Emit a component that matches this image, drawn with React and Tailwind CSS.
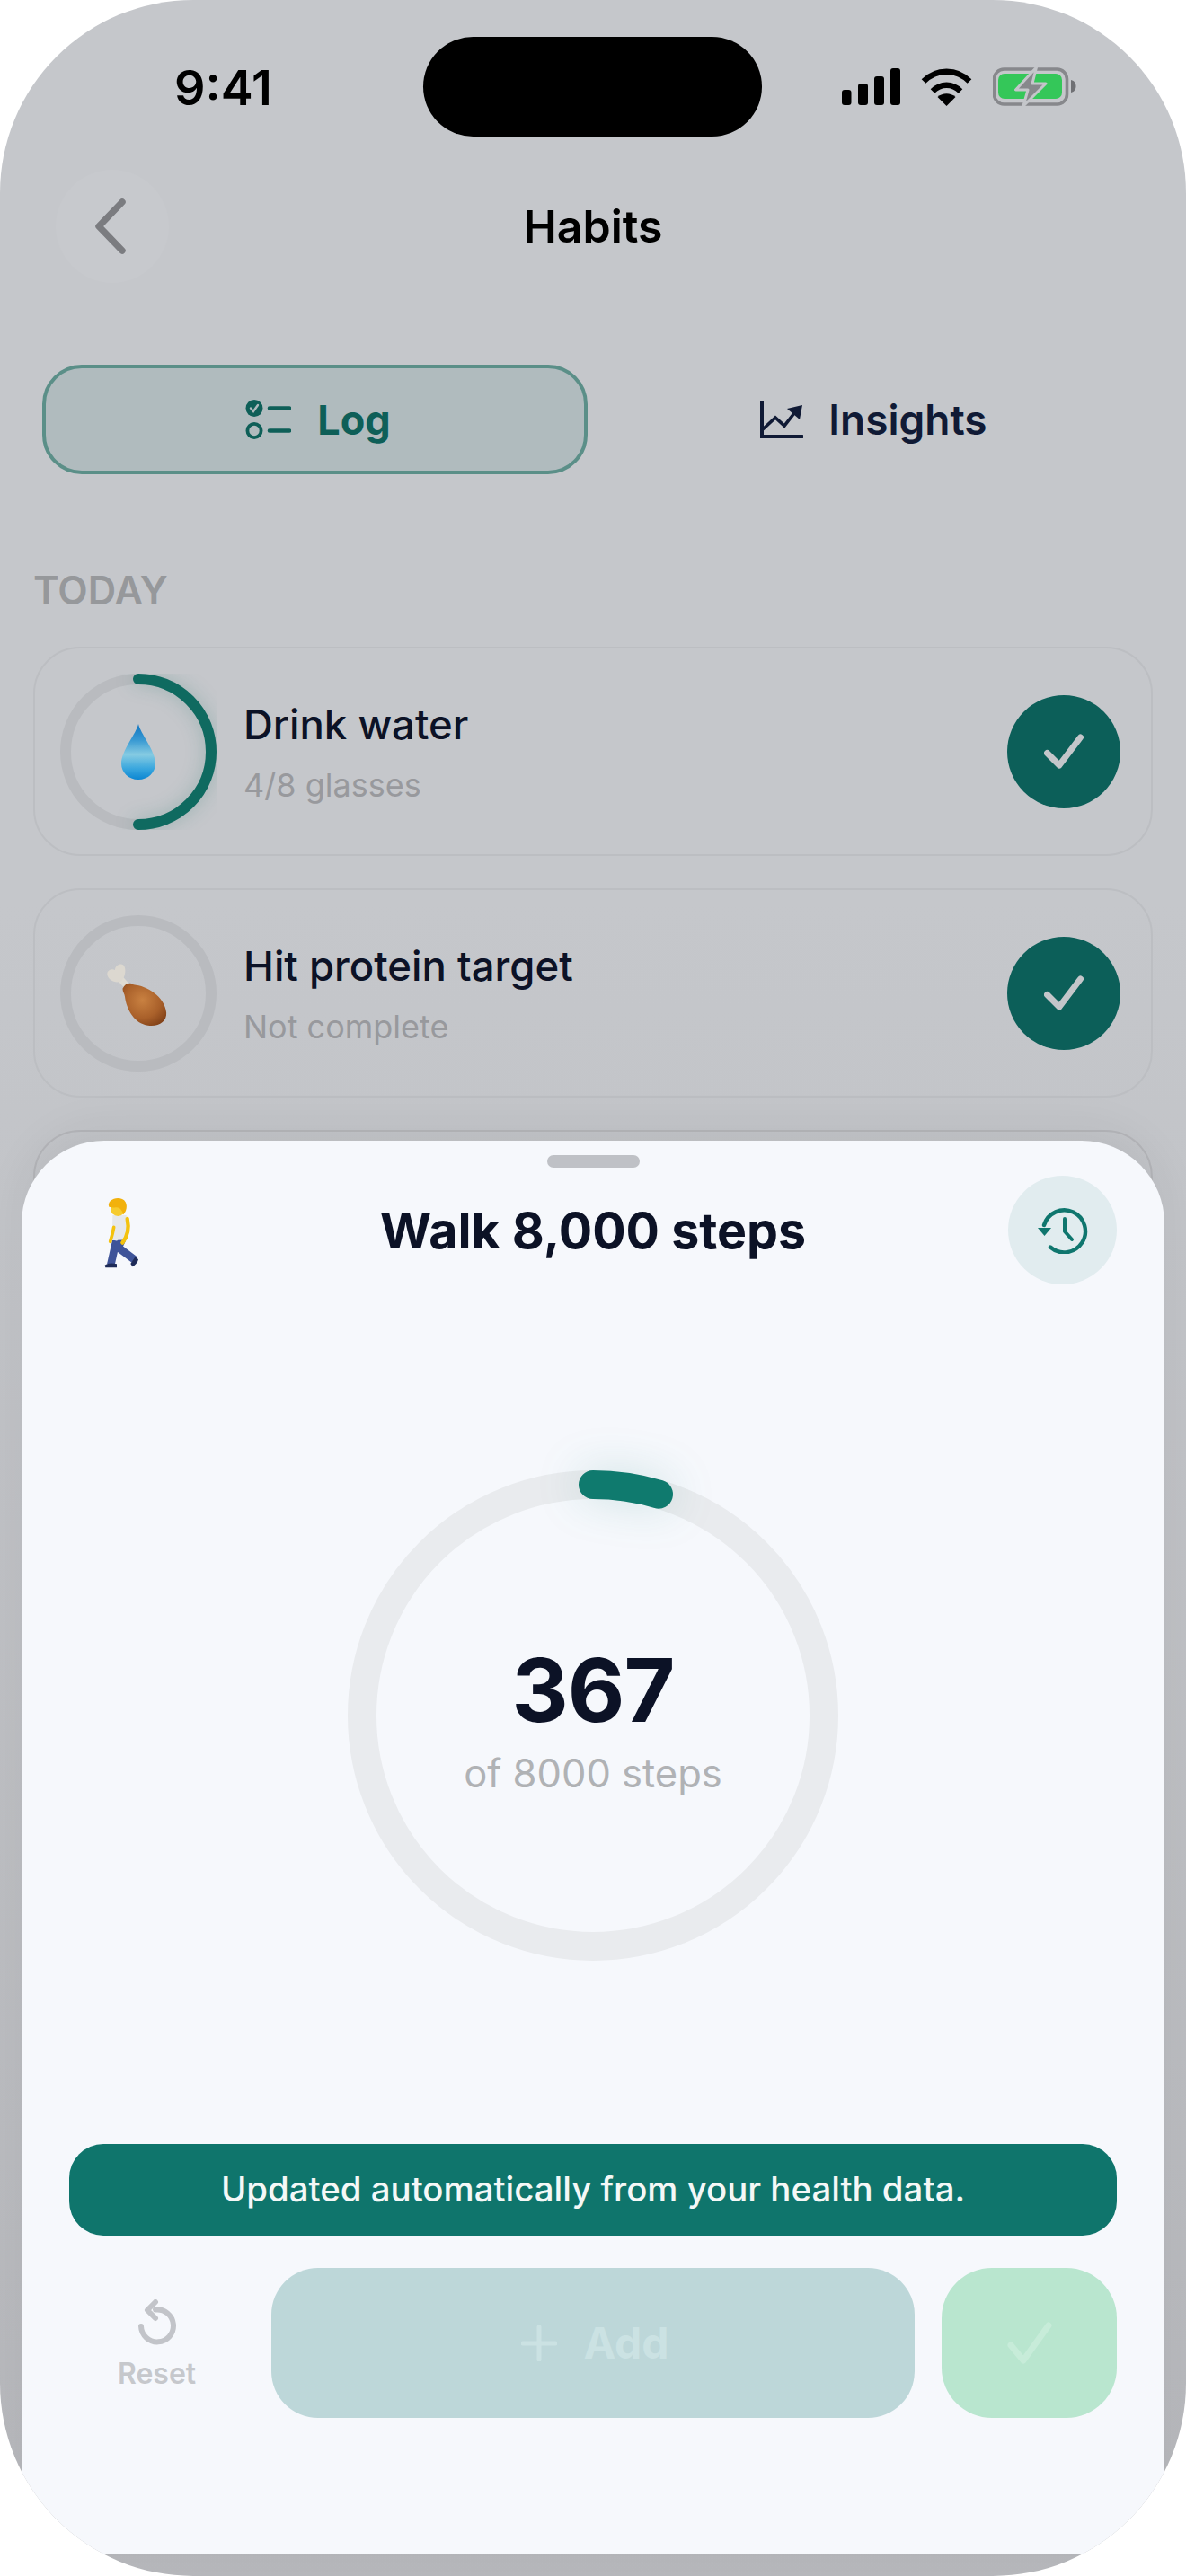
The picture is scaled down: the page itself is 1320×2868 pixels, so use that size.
import React from "react";

const Signal = () => (
  <svg width="65" height="41" viewBox="0 0 65 41" fill="#000">
    <rect x="0" y="24" width="10.5" height="17" rx="3" />
    <rect x="18" y="17" width="11" height="24" rx="3" />
    <rect x="36" y="9" width="11" height="32" rx="3" />
    <rect x="54" y="0" width="11" height="41" rx="3" />
  </svg>
);

const Wifi = () => (
  <svg width="57" height="42" viewBox="0 0 57 42" fill="none">
    <path d="M3 14.5C17 0 40 0 54 14.5" stroke="#000" strokeWidth="6.5" />
    <path d="M13 25.5C22 16.5 35 16.5 44 25.5" stroke="#000" strokeWidth="6.5" />
    <path d="M28.5 42L18.5 32C24 27 33 27 38.5 32Z" fill="#000" />
  </svg>
);

const Battery = () => (
  <svg width="93" height="43" viewBox="11 10 93 43" fill="none">
    <rect x="12.5" y="12" width="81" height="39" rx="11" stroke="#87888c" strokeWidth="3.6" />
    <rect x="17" y="17" width="71" height="28" rx="7" fill="#34c759" />
    <path d="M98 24C102 25 103.5 28 103.5 31C103.5 34 102 37 98 38Z" fill="#6f7074" />
    <path
      d="M59.5 10L36.5 35H50L45 53L70 28H55Z"
      fill="#87888c"
      stroke="#c4c6ca"
      strokeWidth="3"
      strokeLinejoin="round"
    />
  </svg>
);

const LogIcon = () => (
  <svg width="52" height="46" viewBox="13 10 52 46" fill="none">
    <circle cx="24" cy="20.5" r="9.5" fill="#0e5f58" />
    <path d="M20 20.5L23 24L28 17" stroke="#b0bbbe" strokeWidth="2.4" strokeLinecap="round" />
    <circle cx="24" cy="45.5" r="7.6" stroke="#0e5f58" strokeWidth="3.8" />
    <path d="M41 20.5H63M41 45.5H63" stroke="#0e5f58" strokeWidth="4.6" strokeLinecap="round" />
  </svg>
);

const InsightsIcon = () => (
  <svg width="48" height="42" viewBox="0 0 48 42" fill="none">
    <path d="M2 0V40H47" stroke="#101a35" strokeWidth="4" strokeLinecap="round" />
    <path d="M3 32L17 19L27 28L38 14" stroke="#101a35" strokeWidth="3.6" />
    <path d="M47 5L30 9L44 21Z" fill="#101a35" />
  </svg>
);

const HistoryIcon = () => (
  <svg width="56" height="52" viewBox="0 0 56 52" fill="none">
    <path d="M7 20A23.5 23.5 0 1 1 14 44.5" stroke="#0f766e" strokeWidth="4.4" strokeLinecap="round" />
    <path d="M0 23H15L7.5 32Z" fill="#0f766e" />
    <path d="M30 13V27L38 36" stroke="#0f766e" strokeWidth="4" strokeLinecap="round" strokeLinejoin="round" />
  </svg>
);

const Drop = () => (
  <svg width="38" height="62" viewBox="0 0 38 62">
    <defs>
      <linearGradient id="dropFill" x1="0.5" y1="0" x2="0.5" y2="1">
        <stop offset="0" stopColor="#0f74c0" />
        <stop offset="0.3" stopColor="#3b9bd3" />
        <stop offset="0.55" stopColor="#86cbe2" />
        <stop offset="0.8" stopColor="#3aa7de" />
        <stop offset="1" stopColor="#0c86d2" />
      </linearGradient>
    </defs>
    <path d="M19 0C21 10 38 30 38 44C38 54 30 62 19 62C8 62 0 54 0 44C0 30 17 10 19 0Z" fill="url(#dropFill)" />
  </svg>
);

const Drumstick = () => (
  <svg width="118" height="118" viewBox="0 0 330 330">
    <defs>
      <radialGradient id="meatFill" cx="0.45" cy="0.4" r="0.7">
        <stop offset="0" stopColor="#c98141" />
        <stop offset="0.6" stopColor="#a9602a" />
        <stop offset="1" stopColor="#7f3f17" />
      </radialGradient>
    </defs>
    <path d="M105 115L132 145" stroke="#dedbd3" strokeWidth="20" />
    <path
      d="M68 105C68 90 85 88 92 92C94 72 120 68 123 85C127 100 120 120 110 128C94 134 70 125 68 105Z"
      fill="#dcd8d0"
    />
    <path
      d="M116 150C123 135 138 128 150 138C192 142 247 175 252 225C254 252 228 270 195 265C153 260 128 215 123 175C122 165 116 160 116 150Z"
      fill="url(#meatFill)"
    />
  </svg>
);

const Walker = () => (
  <svg width="90" height="110" viewBox="0 0 270 330" fill="none">
    <path d="M118 205L100 285" stroke="#3f5499" strokeWidth="26" />
    <path d="M138 200L125 228L178 268" stroke="#3f5499" strokeWidth="26" strokeLinejoin="round" />
    <path d="M80 287C90 279 105 279 120 283V295H82Z" fill="#1e2b58" />
    <path d="M166 282L182 258L192 268C190 276 182 288 172 292Z" fill="#1e2b58" />
    <path d="M106 120L152 120C158 150 158 175 158 202L104 204Z" fill="#e6e8ea" />
    <path d="M110 160C107 178 103 192 98 208" stroke="#f4c20d" strokeWidth="11" strokeLinecap="round" />
    <path d="M155 132C161 160 158 188 139 212" stroke="#f4c20d" strokeWidth="13" strokeLinecap="round" />
    <circle cx="124" cy="98" r="25" fill="#f6cb2e" />
    <path d="M94 92C86 72 116 56 138 66C158 74 156 104 142 118C138 102 128 92 118 94C110 95 102 94 94 92Z" fill="#f2b10c" />
  </svg>
);

const HabitCard = ({ title, subtitle, progress, children }) => (
  <div className="h-[233px] flex items-center pl-[28px] pr-[34px] rounded-[52px] border-2 border-[#bcbec2]">
    <div className="relative w-[174px] h-[174px] flex items-center justify-center">
      <svg className="absolute inset-0" width="174" height="174" viewBox="0 0 174 174" fill="none">
        <circle cx="87" cy="87" r="81" stroke="#b9bbbf" strokeWidth="12" />
        {progress && (
          <path
            d="M87 6A81 81 0 0 1 87 168"
            stroke="#0f6a60"
            strokeWidth="12"
            strokeLinecap="round"
            className="drop-shadow-[0_0_10px_rgba(15,106,96,0.25)]"
          />
        )}
      </svg>
      {children}
    </div>
    <div className="ml-[30px] flex-1 mt-[3px]">
      <div className="text-[45.5px] leading-[54px] font-medium text-[#0c1226]">{title}</div>
      <div className="mt-[18px] text-[36px] leading-[44px] text-[#98999d]">{subtitle}</div>
    </div>
    <div className="w-[126px] h-[126px] rounded-full bg-[#0c5f59] flex items-center justify-center">
      <svg width="44" height="40" viewBox="0 0 44 40" fill="none">
        <path d="M3.5 21.5L17 35L40.5 4" stroke="#c4c6ca" strokeWidth="7" strokeLinecap="round" strokeLinejoin="round" />
      </svg>
    </div>
  </div>
);

const App = () => {
  return (
    <div className="w-[1320px] h-[2868px] bg-white font-['Inter',sans-serif]">
      <div className="relative w-full h-full overflow-hidden rounded-[215px] bg-gradient-to-b from-[#c5c7cb] from-35% to-[#b6b7bb]">
        {/* status bar */}
        <div className="pt-[41px] flex items-center">
          <div className="w-[471px] pl-[194px] pt-[2px] text-[54px] leading-[60px] font-semibold text-black">9:41</div>
          <div className="w-[377px] h-[111px] rounded-full bg-black" />
          <div className="pl-[89px] flex items-center">
            <Signal />
            <div className="ml-[23px]">
              <Wifi />
            </div>
            <div className="ml-[23px]">
              <Battery />
            </div>
          </div>
        </div>

        {/* nav */}
        <div className="mt-[37px] px-[62px] grid grid-cols-[1fr_auto_1fr] items-center">
          <div className="w-[126px] h-[126px] rounded-full bg-[#c7c9cd] flex items-center justify-center">
            <svg width="40" height="64" viewBox="0 0 40 64" fill="none" className="-ml-[2px]">
              <path d="M32 5L6 32L32 59" stroke="#7b7c80" strokeWidth="7.5" strokeLinecap="round" strokeLinejoin="round" />
            </svg>
          </div>
          <div className="text-[50px] leading-[60px] font-semibold text-black">Habits</div>
          <div />
        </div>

        {/* tabs */}
        <div className="mt-[91px] px-[47px] grid grid-cols-2 gap-3 h-[122px]">
          <div className="rounded-[44px] border-4 border-[#5b8f88] bg-[#b0bbbe] flex items-center justify-center gap-[29px] pl-[6px] text-[#0e5f58]">
            <LogIcon />
            <span className="text-[45px] font-bold leading-none">Log</span>
          </div>
          <div className="flex items-center justify-center gap-[28px] pl-[6px] text-[#101a35]">
            <InsightsIcon />
            <span className="text-[46px] font-semibold leading-none">Insights</span>
          </div>
        </div>

        <div className="mt-[102px] pl-[37px] text-[43.5px] leading-[54px] font-semibold text-[#96989b]">TODAY</div>

        <div className="mt-[36px] px-[37px] flex flex-col gap-[36px]">
          <HabitCard title="Drink water" subtitle="4/8 glasses" progress>
            <Drop />
          </HabitCard>
          <HabitCard title="Hit protein target" subtitle="Not complete">
            <Drumstick />
          </HabitCard>
          <div className="h-[233px] rounded-[52px] border-2 border-[#b4b5b9]" />
        </div>

        {/* bottom sheet */}
        <div className="absolute left-[24px] right-[24px] top-[1270px] bottom-[24px] rounded-t-[92px] bg-[#f6f8fc] shadow-[0_-16px_50px_rgba(0,0,0,0.05)] px-[53px]">
          <div className="pt-[16px] flex justify-center">
            <div className="w-[103px] h-[14px] rounded-full bg-[#bfc1c6]" />
          </div>

          <div className="mt-[9px] grid grid-cols-[1fr_auto_1fr] items-center">
            <div className="pl-[13px] -mt-[3px]">
              <Walker />
            </div>
            <div className="text-[55.5px] leading-[68px] font-bold text-[#0c1226]">Walk 8,000 steps</div>
            <div className="flex justify-end">
              <div className="w-[121px] h-[121px] rounded-full bg-[#e1ecef] flex items-center justify-center">
                <HistoryIcon />
              </div>
            </div>
          </div>

          <div className="mt-[207px] relative w-[546px] h-[546px] mx-auto flex flex-col items-center justify-center">
            <svg className="absolute inset-0 overflow-visible" width="546" height="546" viewBox="0 0 546 546" fill="none">
              <circle cx="273" cy="273" r="257" stroke="#e9ebee" strokeWidth="32" />
              <path
                d="M273 16A257 257 0 0 1 346 26.6"
                stroke="#0f7a6e"
                strokeWidth="32"
                strokeLinecap="round"
                className="drop-shadow-[0_0_24px_rgba(15,122,110,0.18)]"
              />
            </svg>
            <div className="relative text-[98px] leading-[110px] tracking-[-1px] font-bold text-[#0c1226] mt-[8px]">367</div>
            <div className="relative text-[43.5px] leading-[54px] text-[#b0b2b5] mt-[10px]">of 8000 steps</div>
          </div>

          <div className="mt-[204px] h-[102px] rounded-[38px] bg-[#0f756c] flex items-center justify-center text-[38.4px] font-medium text-[#f4f8f7]">
            Updated automatically from your health data.
          </div>

          <div className="mt-[36px] h-[167px] flex gap-[30px]">
            <div className="w-[195px] pt-[8px] flex flex-col items-center justify-center text-[#c6c8cc]">
              <svg width="42" height="52" viewBox="0 0 42 52" fill="none" className="-mt-[4px]">
                <path d="M19 11.5A18 18 0 1 1 3 30" stroke="#c2c4c9" strokeWidth="6" strokeLinecap="round" />
                <path d="M19 3L10 12L19 21" stroke="#c2c4c9" strokeWidth="6" strokeLinecap="round" strokeLinejoin="round" />
              </svg>
              <span className="mt-[12px] text-[32px] leading-[38px] font-semibold">Reset</span>
            </div>
            <div className="w-[716px] rounded-[52px] bg-[#bdd7d9] flex items-center justify-center gap-[29px] pl-[5px] text-[#cbe2e3]">
              <svg width="40" height="40" viewBox="0 0 40 40" fill="none">
                <path d="M20 2V38M2 20H38" stroke="#cbe2e3" strokeWidth="5" strokeLinecap="round" />
              </svg>
              <span className="text-[48px] font-bold leading-none">Add</span>
            </div>
            <div className="w-[195px] rounded-[56px] bg-[#b9e6cf] flex items-center justify-center">
              <svg width="50" height="48" viewBox="0 0 50 48" fill="none">
                <path d="M4 26L18 43L46 4" stroke="#c7ecd9" strokeWidth="7" strokeLinecap="round" strokeLinejoin="round" />
              </svg>
            </div>
          </div>
        </div>
      </div>
    </div>
  );
};

export default App;
